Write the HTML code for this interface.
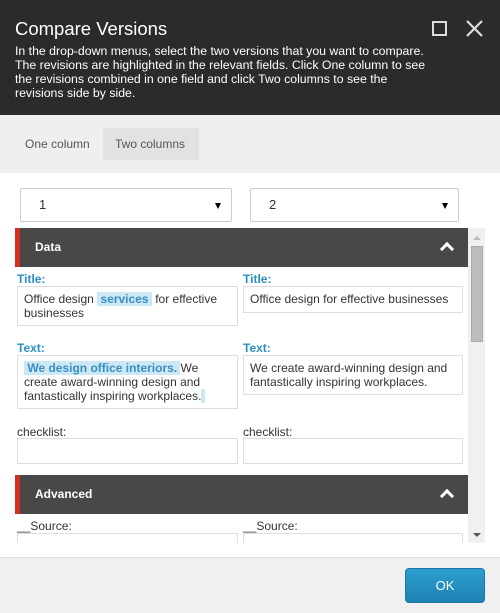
<!DOCTYPE html>
<html><head><style>
*{box-sizing:border-box;margin:0;padding:0}
body{width:500px;height:613px;overflow:hidden;background:#fff;font-family:"Liberation Sans",Arial,sans-serif;position:relative}
.hd{position:absolute;left:0;top:0;width:500px;height:115px;background:#2b2b2b;color:#fff}
.hd h1{position:absolute;left:15px;top:18px;font-size:18.5px;font-weight:normal}
.hd p{position:absolute;left:15px;top:44px;font-size:12.3px;line-height:14px;white-space:nowrap}
.tabs{position:absolute;left:0;top:115px;width:500px;height:58px;background:#efefef;font-size:12px;color:#555}
.tab{position:absolute;top:13px;height:32px;line-height:32px;padding:0 12px}
.sel{position:absolute;top:188px;height:34px;border:1px solid #ccc;border-radius:2px;font-size:13px;color:#333;line-height:32px;padding-left:18px}
.sel:after{content:"";position:absolute;right:10px;top:14px;border-left:3.5px solid transparent;border-right:3.5px solid transparent;border-top:6px solid #000}
.clip{position:absolute;left:15px;top:228px;width:470px;height:315px;overflow:hidden}
.sb{position:absolute;right:0;top:0;width:17px;height:315px;background:#f0f0f0}
.sec{position:absolute;left:0;width:453px;height:39px;background:#484848;border-left:5px solid #d42e21;color:#fff;font-weight:bold;font-size:12px;line-height:39px;padding-left:15px}
.chev{position:absolute;right:16px;top:16px;width:10px;height:10px;border-left:3px solid #fff;border-top:3px solid #fff;transform:rotate(45deg)}
.lb{position:absolute;font-size:12px;color:#333}
.lb.b{color:#2a8fc4;font-weight:bold}
.bx{position:absolute;border:1px solid #ddd;font-size:12px;color:#333;line-height:14px;padding:5px 6px}
.hl{background:#cce8f4;color:#3a8fc0;font-weight:bold}
.ft{position:absolute;left:0;top:557px;width:500px;height:56px;background:#f0f0f0;border-top:1px solid #ddd}
.ok{position:absolute;left:405px;top:10px;width:80px;height:35px;border-radius:4px;background:linear-gradient(#2c9ed0,#1e82b2);border:1px solid #1a76a4;color:#fff;font-size:13px;text-align:center;line-height:33px}
</style></head><body>
<div class="hd"><h1>Compare Versions</h1>
<p>In the drop-down menus, select the two versions that you want to compare.<br>The revisions are highlighted in the relevant fields. Click One column to see<br>the revisions combined in one field and click Two columns to see the<br>revisions side by side.</p>
<div style="position:absolute;left:432px;top:21px;width:15px;height:15px;border:2px solid #ddd"></div>
<svg style="position:absolute;left:466px;top:20px" width="17" height="17"><path d="M1 1L16 16M16 1L1 16" stroke="#ddd" stroke-width="2.2"/></svg>
</div>
<div class="tabs"><div class="tab" style="left:13px">One column</div><div class="tab" style="left:103px;width:96px;background:#e2e2e2">Two columns</div></div>
<div class="sel" style="left:20px;width:212px">1</div>
<div class="sel" style="left:250px;width:209px">2</div>
<div class="clip">
<div class="sec" style="top:0">Data<div class="chev"></div></div>
<div class="lb b" style="left:2px;top:44px">Title:</div>
<div class="lb b" style="left:228px;top:44px">Title:</div>
<div class="bx" style="left:2px;top:58px;width:221px;height:40px">Office design <span class="hl">&nbsp;services&nbsp;</span> for effective businesses</div>
<div class="bx" style="left:228px;top:58px;width:220px;height:27px">Office design for effective businesses</div>
<div class="lb b" style="left:2px;top:113px">Text:</div>
<div class="lb b" style="left:228px;top:113px">Text:</div>
<div class="bx" style="left:2px;top:127px;width:221px;height:54px"><span class="hl">&nbsp;We design office interiors.&nbsp;</span>We create award-winning design and fantastically inspiring workplaces.<span class="hl">&nbsp;</span></div>
<div class="bx" style="left:228px;top:127px;width:220px;height:40px">We create award-winning design and fantastically inspiring workplaces.</div>
<div class="lb" style="left:2px;top:197px">checklist:</div>
<div class="lb" style="left:228px;top:197px">checklist:</div>
<div class="bx" style="left:2px;top:210px;width:221px;height:26px"></div>
<div class="bx" style="left:228px;top:210px;width:220px;height:26px"></div>
<div class="sec" style="top:247px">Advanced<div class="chev"></div></div>
<div class="lb" style="left:2px;top:291px">__Source:</div>
<div class="lb" style="left:228px;top:291px">__Source:</div>
<div class="bx" style="left:2px;top:305px;width:221px;height:26px"></div>
<div class="bx" style="left:228px;top:305px;width:220px;height:26px"></div>
<div class="sb"><div style="position:absolute;left:3px;top:18px;width:12px;height:96px;background:#bcbcbc;border:1px solid #aaa"></div>
<div style="position:absolute;left:5px;top:8px;border-left:4px solid transparent;border-right:4px solid transparent;border-bottom:4px solid #bbb"></div>
<div style="position:absolute;left:5px;top:305px;border-left:4px solid transparent;border-right:4px solid transparent;border-top:4px solid #555"></div></div>
</div>
<div class="ft"><div class="ok">OK</div></div>
</body></html>
